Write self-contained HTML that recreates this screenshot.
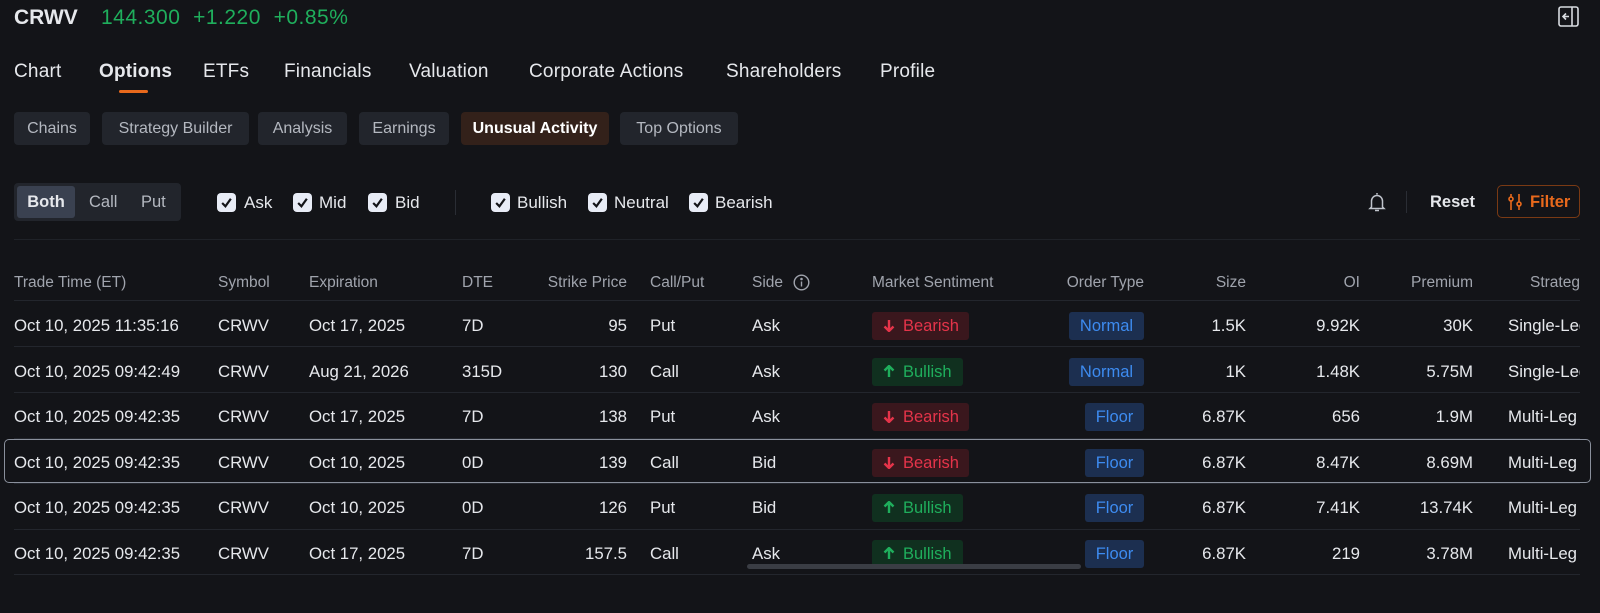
<!DOCTYPE html>
<html><head><meta charset="utf-8"><style>
*{box-sizing:border-box;margin:0;padding:0}
body{width:1600px;height:613px;background:#131418;color:#e6e8ec;font-family:"Liberation Sans",sans-serif;position:relative;overflow:hidden}
.a{position:absolute;white-space:nowrap}
.tab{font-size:19px;color:#e6e8ec;top:61px;letter-spacing:0.2px}
.st{top:112px;height:33px;line-height:34px;background:#22252c;border-radius:4px;font-size:16px;color:#b4b8c0;text-align:center}
.cb{top:193px;height:19px;width:19px;border-radius:4px;background:#e8ecf6}
.cb svg{position:absolute;left:3px;top:3px}
.lb{top:193px;font-size:17px;line-height:19px;color:#e6e8ec}
.hd{top:274px;font-size:15.5px;color:#a0a4ad}
.ln{left:14px;width:1566px;height:1px;background:#23262d}
.c{font-size:16.8px;color:#e6e8ec}
.r{text-align:right}
.bd{height:28px;line-height:28px;border-radius:3px;font-size:16.5px;padding:0 11px}
.be{background:#3a171d;color:#e5344a;width:97px}
.bu{background:#10301f;color:#1fae5c;width:91px}
.ot{background:#1c2f50;color:#3d8bf0;text-align:center}
</style></head><body>
<div class="a" style="left:14px;top:6px;font-size:21px;font-weight:bold">CRWV</div>
<div class="a" style="left:101px;top:6px;font-size:21px;color:#1fae5c;letter-spacing:0.5px">144.300&nbsp; +1.220&nbsp; +0.85%</div>
<svg class="a" style="left:1558px;top:6px" width="21" height="21" viewBox="0 0 21 21" fill="none" stroke="#d8dbe0" stroke-width="1.6"><rect x="1" y="1" width="19" height="19" rx="2"/><line x1="14" y1="1" x2="14" y2="20"/><path d="M11 10.5H5M8 7.5L5 10.5L8 13.5"/></svg>

<div class="a tab" style="left:14px">Chart</div>
<div class="a tab" style="left:99px;font-weight:bold">Options</div>
<div class="a" style="left:119px;top:90px;width:29px;height:3px;background:#e8691c;border-radius:2px"></div>
<div class="a tab" style="left:203px">ETFs</div>
<div class="a tab" style="left:284px">Financials</div>
<div class="a tab" style="left:409px">Valuation</div>
<div class="a tab" style="left:529px">Corporate Actions</div>
<div class="a tab" style="left:726px">Shareholders</div>
<div class="a tab" style="left:880px">Profile</div>

<div class="a st" style="left:14px;width:76px">Chains</div>
<div class="a st" style="left:102px;width:147px">Strategy Builder</div>
<div class="a st" style="left:258px;width:89px">Analysis</div>
<div class="a st" style="left:359px;width:90px">Earnings</div>
<div class="a st" style="left:461px;width:148px;background:#33211a;color:#fff;font-weight:bold">Unusual Activity</div>
<div class="a st" style="left:620px;width:118px">Top Options</div>

<div class="a" style="left:14px;top:183px;width:167px;height:38px;background:#22252c;border-radius:4px"></div>
<div class="a" style="left:17px;top:186px;width:58px;height:32px;background:#3a4150;border-radius:3px;font-size:16.5px;line-height:32px;text-align:center;font-weight:bold">Both</div>
<div class="a" style="left:89px;top:193px;font-size:16.5px;color:#b4b8c0">Call</div>
<div class="a" style="left:141px;top:193px;font-size:16.5px;color:#b4b8c0">Put</div>

<div class="a cb" style="left:217px"><svg width="13" height="13" viewBox="0 0 12 12"><path d="M2 6.5L5 9.5L10 2.5" stroke="#131418" stroke-width="2" fill="none"/></svg></div><div class="a lb" style="left:244px">Ask</div>
<div class="a cb" style="left:293px"><svg width="13" height="13" viewBox="0 0 12 12"><path d="M2 6.5L5 9.5L10 2.5" stroke="#131418" stroke-width="2" fill="none"/></svg></div><div class="a lb" style="left:319px">Mid</div>
<div class="a cb" style="left:368px"><svg width="13" height="13" viewBox="0 0 12 12"><path d="M2 6.5L5 9.5L10 2.5" stroke="#131418" stroke-width="2" fill="none"/></svg></div><div class="a lb" style="left:395px">Bid</div>
<div class="a" style="left:455px;top:190px;width:1px;height:25px;background:#2a2d34"></div>
<div class="a cb" style="left:491px"><svg width="13" height="13" viewBox="0 0 12 12"><path d="M2 6.5L5 9.5L10 2.5" stroke="#131418" stroke-width="2" fill="none"/></svg></div><div class="a lb" style="left:517px">Bullish</div>
<div class="a cb" style="left:588px"><svg width="13" height="13" viewBox="0 0 12 12"><path d="M2 6.5L5 9.5L10 2.5" stroke="#131418" stroke-width="2" fill="none"/></svg></div><div class="a lb" style="left:614px">Neutral</div>
<div class="a cb" style="left:689px"><svg width="13" height="13" viewBox="0 0 12 12"><path d="M2 6.5L5 9.5L10 2.5" stroke="#131418" stroke-width="2" fill="none"/></svg></div><div class="a lb" style="left:715px">Bearish</div>

<svg class="a" style="left:1367px;top:191px" width="20" height="22" viewBox="0 0 20 22" fill="none" stroke="#c0c4cc" stroke-width="1.5"><path d="M10 2V3.5M4.5 16V10a5.5 5.5 0 0 1 11 0v6l1.5 1.5H3z"/><path d="M8 19.5h4"/></svg>
<div class="a" style="left:1406px;top:191px;width:1px;height:22px;background:#2a2d34"></div>
<div class="a" style="left:1430px;top:193px;font-size:16.5px;font-weight:bold;color:#e6e8ec">Reset</div>
<div class="a" style="left:1497px;top:185px;width:83px;height:33px;border:1.5px solid #7a3a14;border-radius:5px"></div>
<svg class="a" style="left:1508px;top:193px" width="14" height="17" viewBox="0 0 14 17" fill="none" stroke="#e8691c" stroke-width="1.6"><path d="M3 1v16M11 1v16"/><circle cx="3" cy="6" r="2" fill="#131418"/><circle cx="11" cy="11" r="2" fill="#131418"/></svg>
<div class="a" style="left:1530px;top:193px;font-size:16.5px;font-weight:bold;color:#e8691c">Filter</div>

<div class="a" style="left:14px;top:239px;width:1566px;height:1px;background:#1f2228"></div>

<div class="a hd" style="left:14px">Trade Time (ET)</div>
<div class="a hd" style="left:218px">Symbol</div>
<div class="a hd" style="left:309px">Expiration</div>
<div class="a hd" style="left:462px">DTE</div>
<div class="a hd r" style="left:527px;width:100px">Strike Price</div>
<div class="a hd" style="left:650px">Call/Put</div>
<div class="a hd" style="left:752px">Side</div>
<svg class="a" style="left:793px;top:274px" width="17" height="17" viewBox="0 0 17 17" fill="none" stroke="#a0a4ad" stroke-width="1.4"><circle cx="8.5" cy="8.5" r="7.3"/><path d="M8.5 7.5v5"/><circle cx="8.5" cy="5" r=".6" fill="#a0a4ad"/></svg>
<div class="a hd" style="left:872px">Market Sentiment</div>
<div class="a hd r" style="left:1044px;width:100px">Order Type</div>
<div class="a hd r" style="left:1146px;width:100px">Size</div>
<div class="a hd r" style="left:1260px;width:100px">OI</div>
<div class="a hd r" style="left:1373px;width:100px">Premium</div>
<div class="a hd" style="left:1530px;width:50px;overflow:hidden">Strategy</div>

<div class="a ln" style="top:300px"></div>
<div class="a ln" style="top:346px"></div>
<div class="a ln" style="top:392px"></div>
<div class="a ln" style="top:438px"></div>
<div class="a ln" style="top:483px"></div>
<div class="a ln" style="top:529px"></div>
<div class="a ln" style="top:574px"></div>
<div class="a" style="left:4px;top:439px;width:1587px;height:44px;border:1.5px solid #8a909c;border-radius:5px"></div>

<div id="rows"></div>
<div class="a" style="left:747px;top:564px;width:334px;height:5px;border-radius:3px;background:#3a3d44"></div>
<script>
var d=[
["Oct 10, 2025 11:35:16","Oct 17, 2025","7D","95","Put","Ask",0,"Normal","1.5K","9.92K","30K","Single-Leg"],
["Oct 10, 2025 09:42:49","Aug 21, 2026","315D","130","Call","Ask",1,"Normal","1K","1.48K","5.75M","Single-Leg"],
["Oct 10, 2025 09:42:35","Oct 17, 2025","7D","138","Put","Ask",0,"Floor","6.87K","656","1.9M","Multi-Leg"],
["Oct 10, 2025 09:42:35","Oct 10, 2025","0D","139","Call","Bid",0,"Floor","6.87K","8.47K","8.69M","Multi-Leg"],
["Oct 10, 2025 09:42:35","Oct 10, 2025","0D","126","Put","Bid",1,"Floor","6.87K","7.41K","13.74K","Multi-Leg"],
["Oct 10, 2025 09:42:35","Oct 17, 2025","7D","157.5","Call","Ask",1,"Floor","6.87K","219","3.78M","Multi-Leg"]];
var h="";
d.forEach(function(r,i){var c=325+i*45.5;var t=c-9;
function T(x,s,e){return '<div class="a c '+(e||'')+'" style="left:'+x+'px;top:'+t+'px'+(e?';width:100px':'')+'">'+s+'</div>'}
h+=T(14,r[0])+T(218,"CRWV")+T(309,r[1])+T(462,r[2])+T(527,r[3],"r")+T(650,r[4])+T(752,r[5]);
var dn='<svg width="12" height="13" viewBox="0 0 12 13" style="margin-right:8px;vertical-align:-1px"><path d="M6 1v11M1.5 7.5L6 12l4.5-4.5" stroke="#e5344a" stroke-width="2.4" fill="none"/></svg>';
var up='<svg width="12" height="13" viewBox="0 0 12 13" style="margin-right:8px;vertical-align:-1px"><path d="M6 12V1M1.5 5.5L6 1l4.5 4.5" stroke="#1fae5c" stroke-width="2.4" fill="none"/></svg>';
h+='<div class="a bd '+(r[6]?'bu':'be')+'" style="left:872px;top:'+(c-13)+'px">'+(r[6]?up:dn)+(r[6]?'Bullish':'Bearish')+'</div>';
var w=r[7]=="Normal"?75:59;
h+='<div class="a bd ot" style="left:'+(1144-w)+'px;width:'+w+'px;padding:0;top:'+(c-13)+'px">'+r[7]+'</div>';
h+=T(1146,r[8],"r")+T(1260,r[9],"r")+T(1373,r[10],"r");
h+='<div class="a c" style="left:1508px;top:'+t+'px;width:72px;overflow:hidden">'+r[11]+'</div>';
});
document.getElementById("rows").innerHTML=h;
</script>
</body></html>
